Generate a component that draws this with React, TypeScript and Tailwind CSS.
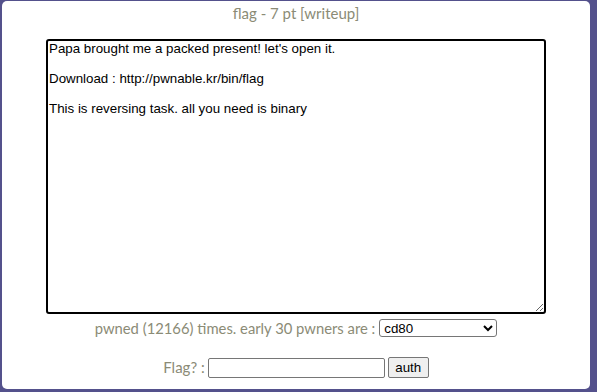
import { useState } from "react";

const challenge = {
  title: "flag - 7 pt [writeup]",
  body: "Papa brought me a packed present! let's open it.\n\nDownload : http://pwnable.kr/bin/flag\n\nThis is reversing task. all you need is binary",
  pwned: 12166,
  pwners: ["cd80", "hkkiw0823", "jmjsky", "bunny", "gulliver"],
};

export default function App() {
  const [flag, setFlag] = useState("");

  return (
    <div className="h-[392px] w-[597px] bg-[#54518c] pt-px pl-[2px]">
      <div className="flex h-[388px] w-[588px] flex-col items-center rounded-[5px] bg-white">
        <div className="mt-[2px] text-[15px] leading-[20px] text-[#8b8b76] [font-family:Lato,sans-serif]">
          {challenge.title}
        </div>

        <textarea
          readOnly
          defaultValue={challenge.body}
          className="mt-[16px] h-[275px] w-[500px] rounded-[3px] border-2 border-black px-px py-0 text-[13.33px] leading-[15px] text-black outline-none [font-family:'Liberation_Sans',Arial,sans-serif]"
        />

        <div className="mt-[5px] flex h-[18px] items-center gap-[4px]">
          <span className="text-[14.8px] text-[#8b8b76] [font-family:Lato,sans-serif]">
            pwned ({challenge.pwned}) times. early 30 pwners are :
          </span>
          <select className="h-[18px] w-[118px] rounded-[3px] border border-[#767676] bg-white text-[13.33px] leading-[16px] text-black [font-family:'Liberation_Sans',Arial,sans-serif]">
            {challenge.pwners.map((p) => (
              <option key={p}>{p}</option>
            ))}
          </select>
        </div>

        <div className="mt-[20px] flex h-[21px] items-center">
          <span className="mr-[3px] text-[15px] text-[#8b8b76] [font-family:Lato,sans-serif]">
            Flag? :
          </span>
          <input
            value={flag}
            onChange={(e) => setFlag(e.target.value)}
            className="h-[20px] w-[177px] rounded-[2px] border border-[#767676] px-[2px] text-[13.33px] outline-none [font-family:'Liberation_Sans',Arial,sans-serif]"
          />
          <button
            type="button"
            className="ml-[3px] h-[21px] w-[41px] rounded-[2px] border border-[#767676] bg-[#efefef] text-[13.33px] text-black [font-family:'Liberation_Sans',Arial,sans-serif]"
          >
            auth
          </button>
        </div>
      </div>
    </div>
  );
}
